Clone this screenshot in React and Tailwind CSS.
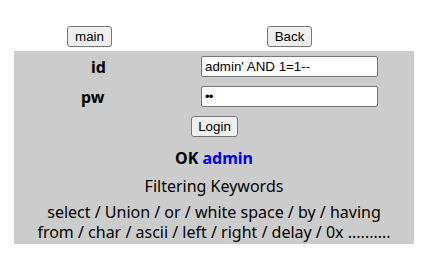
export default function App() {
  const btn =
    "h-[21px] border border-[#767676] rounded-[3px] bg-[#efefef] text-[13.33px] text-black flex items-center justify-center leading-none";
  const inp =
    "w-[177px] h-[21px] border border-[#767676] rounded-[2px] bg-white px-[3px] text-[13.33px] text-black flex items-center";
  return (
    <div className="w-[441px] h-[269px] bg-white pt-[26px]" style={{ fontFamily: '"Liberation Sans", Arial, sans-serif' }}>
      <div className="flex h-[21px]">
        <div className={`${btn} ml-[67px] w-[45px]`}>main</div>
        <div className={`${btn} ml-[155px] w-[45px]`}>Back</div>
      </div>
      <div
        className="ml-[14px] mt-[4px] w-[400px] bg-[#cccccc] pt-[5px] pb-[2px] flex flex-col"
        style={{ fontFamily: '"Noto Sans", "Noto Sans CJK KR", sans-serif' }}
      >
        <div className="flex h-[21px] items-center">
          <div className="w-[187px] pl-[77px] font-bold text-[16px] text-black">id</div>
          <div className={inp} style={{ fontFamily: '"Liberation Sans", Arial, sans-serif' }}>admin' AND 1=1--</div>
        </div>
        <div className="flex h-[21px] items-center mt-[9px]">
          <div className="w-[187px] pl-[67px] font-bold text-[16px] text-black">pw</div>
          <div className={`${inp} text-[10px] tracking-[-1px]`} style={{ fontFamily: '"Liberation Sans", Arial, sans-serif' }}>••</div>
        </div>
        <div className="flex justify-center mt-[9px] pl-[1px]">
          <div className={`${btn} w-[47px]`} style={{ fontFamily: '"Liberation Sans", Arial, sans-serif' }}>Login</div>
        </div>
        <div className="text-center font-bold text-[16px] leading-[22px] mt-[10px] text-black">
          OK <span className="text-[#0000ff]">admin</span>
        </div>
        <div className="text-center text-[16px] leading-[22px] mt-[6px] text-black">Filtering Keywords</div>
        <div className="text-center text-[16px] leading-[20px] mt-[5px] text-black">
          select / Union / or / white space / by / having
          <br />
          from / char / ascii / left / right / delay / 0x ..........
        </div>
      </div>
    </div>
  );
}
